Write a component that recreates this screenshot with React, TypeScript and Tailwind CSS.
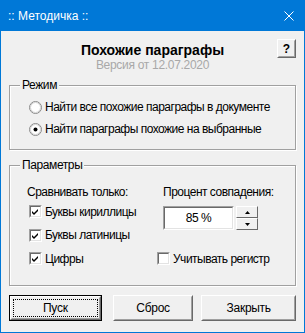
import React from "react";

const font = { fontFamily: '"Liberation Sans", Arial, sans-serif' };

function Radio({ checked }: { checked?: boolean }) {
  return (
    <svg width="13" height="13" viewBox="0 0 13 13" className="shrink-0">
      <circle cx="6.5" cy="6.5" r="6" fill="#fff" stroke="#8a8a8a" strokeWidth="1" />
      <circle cx="6.5" cy="6.5" r="5" fill="none" stroke="#d0d0d0" strokeWidth="1" />
      {checked && <circle cx="6.5" cy="6.5" r="2" fill="#000" />}
    </svg>
  );
}

function Check({ checked }: { checked?: boolean }) {
  return (
    <div className="w-[13px] h-[13px] shrink-0 bg-white border border-t-[#a0a0a0] border-l-[#a0a0a0] border-r-white border-b-white">
      <div className="w-full h-full border border-t-[#696969] border-l-[#696969] border-r-[#e3e3e3] border-b-[#e3e3e3] flex items-center justify-center">
        {checked && (
          <svg width="7" height="7" viewBox="0 0 7 7">
            <path d="M0 3 L2 5 L6 1 L6 3 L2 7 L0 5 Z" fill="#000" />
          </svg>
        )}
      </div>
    </div>
  );
}

function Btn({ children, def, className }: { children: React.ReactNode; def?: boolean; className?: string }) {
  return (
    <div className={`h-[26px] ${def ? "border border-black" : ""} ${className ?? ""}`}>
      <div className="w-full h-full border border-t-white border-l-white border-r-[#696969] border-b-[#696969] bg-[#f0f0f0]">
        <div className="w-full h-full border border-t-[#f0f0f0] border-l-[#f0f0f0] border-r-[#a0a0a0] border-b-[#a0a0a0] flex items-center justify-center p-[1px]">
          <div className={`w-full h-full flex items-center justify-center text-[12px] tracking-[-0.3px] text-black ${def ? "border border-dotted border-black" : ""}`}>
            {children}
          </div>
        </div>
      </div>
    </div>
  );
}

function Group({ label, children, className }: { label: string; children: React.ReactNode; className?: string }) {
  return (
    <div className={`relative border border-[#a0a0a0] shadow-[inset_1px_1px_0_#fff,1px_1px_0_#fff] ${className ?? ""}`}>
      <div className="absolute top-[-9px] left-[10px] bg-[#f0f0f0] px-[2px] text-[12px] tracking-[-0.4px] leading-[16px] text-black">{label}</div>
      {children}
    </div>
  );
}

export default function App() {
  return (
    <div className="w-[305px] h-[333px] bg-[#0078d7] px-[1px] pb-[1px] flex flex-col" style={font}>
      <div className="h-[31px] flex items-center justify-between pl-[7px] pr-[10px]">
        <span className="text-white text-[12px]">:: Методичка ::</span>
        <svg width="10" height="10" viewBox="0 0 10 10">
          <path d="M0.5 0.5 L9.5 9.5 M9.5 0.5 L0.5 9.5" stroke="#fff" strokeWidth="1" />
        </svg>
      </div>
      <div className="flex-1 bg-[#f0f0f0] flex flex-col px-[8px]">
        <div className="relative pt-[11px] flex flex-col items-center">
          <div className="text-[14px] leading-[16px] font-bold text-black">Похожие параграфы</div>
          <div className="text-[12px] leading-[15px] tracking-[-0.3px] text-[#a8a8a8]">Версия от 12.07.2020</div>
          <div className="absolute right-[0px] top-[8px] w-[19px] h-[19px] border border-t-white border-l-white border-r-[#696969] border-b-[#696969]">
            <div className="w-full h-full border border-t-[#f0f0f0] border-l-[#f0f0f0] border-r-[#a0a0a0] border-b-[#a0a0a0] flex items-center justify-center text-[12px] font-bold text-black">?</div>
          </div>
        </div>

        <Group label="Режим" className="mt-[12px] pt-[10px] pb-[9px] pl-[19px]">
          <div className="h-[22px] flex items-center gap-[3px] text-[12px] tracking-[-0.5px] text-black">
            <Radio />
            <span>Найти все похожие параграфы в документе</span>
          </div>
          <div className="h-[22px] flex items-center gap-[3px] text-[12px] tracking-[-0.5px] text-black">
            <Radio checked />
            <span>Найти параграфы похожие на выбранные</span>
          </div>
        </Group>

        <Group label="Параметры" className="mt-[15px] pt-[18px] pb-[15px] pl-[17px]">
          <div className="grid grid-cols-[136px_1fr] grid-rows-[16px_23px_24px_23px] text-[12px] tracking-[-0.5px] text-black">
            <div className="leading-[16px]">Сравнивать только:</div>
            <div className="leading-[16px]">Процент совпадения:</div>
            <div className="flex items-center gap-[3px] pl-[2px]">
              <Check checked />
              <span>Буквы кириллицы</span>
            </div>
            <div className="relative">
              <div className="absolute top-[6px] left-0 flex gap-[2px]">
                <div className="w-[71px] h-[24px] bg-white border border-t-[#a0a0a0] border-l-[#a0a0a0] border-r-white border-b-white">
                  <div className="w-full h-full border border-t-[#696969] border-l-[#696969] border-r-[#e3e3e3] border-b-[#e3e3e3] flex items-center justify-center">85 %</div>
                </div>
                <div className="flex flex-col w-[22px] h-[24px]">
                  <div className="h-[12px] border border-t-white border-l-white border-r-[#696969] border-b-[#696969] flex items-center justify-center">
                    <svg width="5" height="3" viewBox="0 0 5 3"><path d="M2.5 0 L5 3 L0 3 Z" fill="#000" /></svg>
                  </div>
                  <div className="h-[12px] border border-t-white border-l-white border-r-[#696969] border-b-[#696969] flex items-center justify-center">
                    <svg width="5" height="3" viewBox="0 0 5 3"><path d="M0 0 L5 0 L2.5 3 Z" fill="#000" /></svg>
                  </div>
                </div>
              </div>
            </div>
            <div className="flex items-center gap-[3px] pl-[2px]">
              <Check checked />
              <span>Буквы латиницы</span>
            </div>
            <div />
            <div className="flex items-center gap-[3px] pl-[2px]">
              <Check checked />
              <span>Цифры</span>
            </div>
            <div className="flex items-center gap-[3px] ml-[-6px]">
              <Check />
              <span>Учитывать регистр</span>
            </div>
          </div>
        </Group>

        <div className="mt-[9px] flex">
          <Btn def className="w-[93px]">Пуск</Btn>
          <Btn className="w-[81px] ml-[11px]">Сброс</Btn>
          <Btn className="w-[95px] ml-[8px]">Закрыть</Btn>
        </div>
      </div>
    </div>
  );
}
